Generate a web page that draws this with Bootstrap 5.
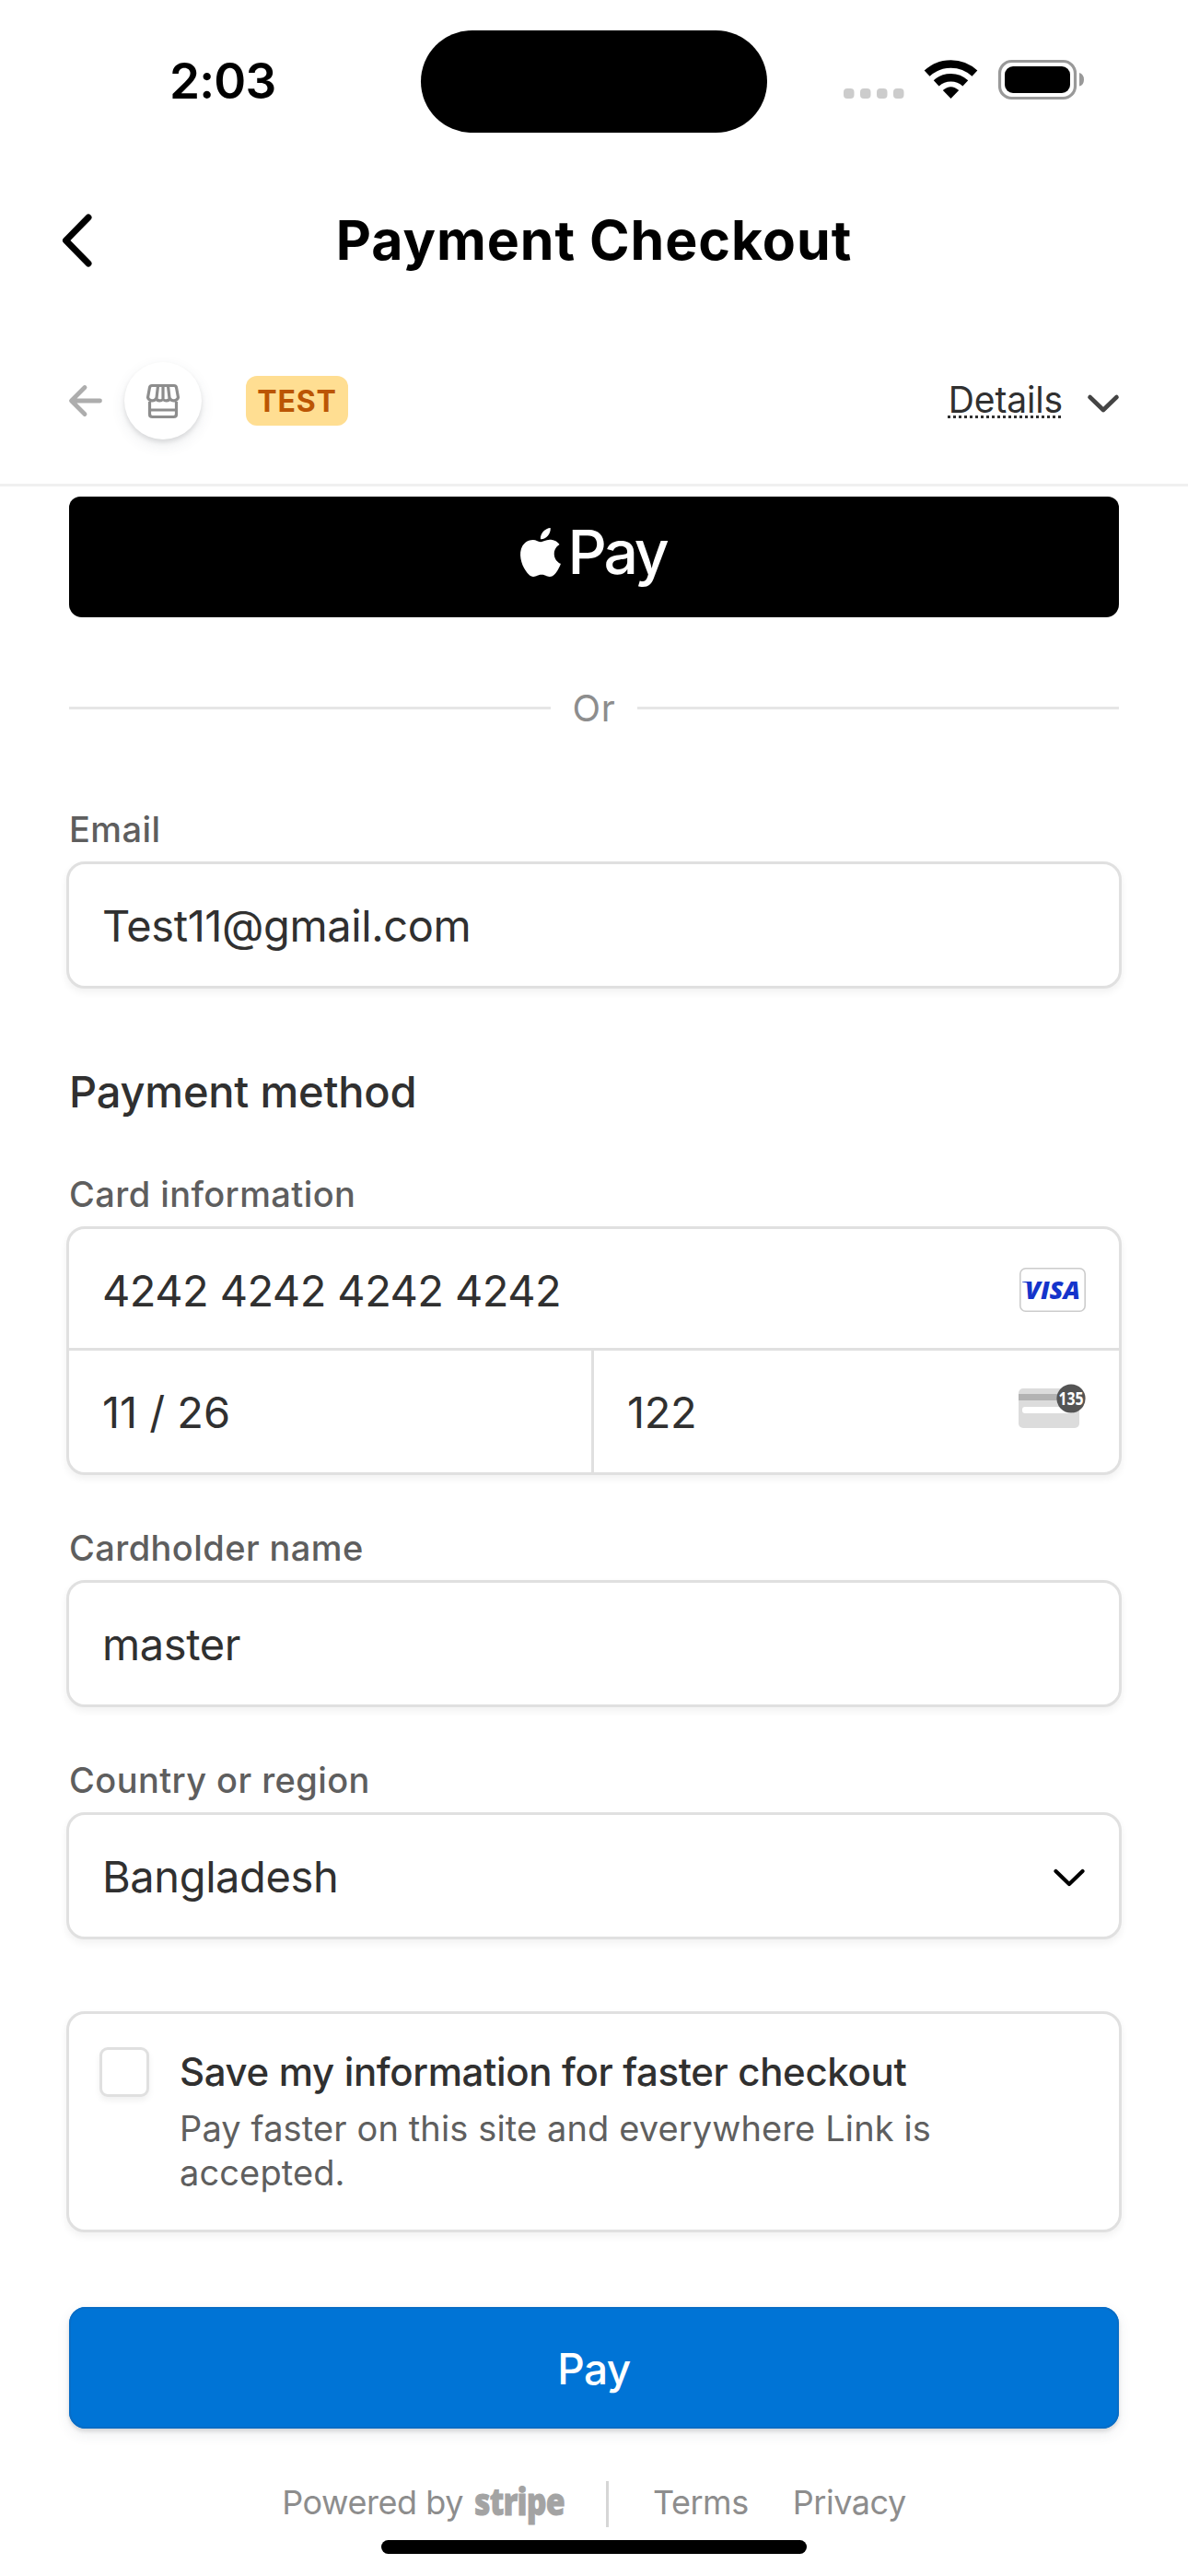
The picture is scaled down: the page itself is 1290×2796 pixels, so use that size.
<!DOCTYPE html>
<html lang="en">
<head>
<meta charset="utf-8">
<meta name="viewport" content="width=device-width, initial-scale=1">
<title>Payment Checkout</title>
<link href="https://cdn.jsdelivr.net/npm/bootstrap@5.3.0/dist/css/bootstrap.min.css" rel="stylesheet">
<style>
  body { font-family: Inter, "Liberation Sans", sans-serif; color: #303030; background: #fff; height: 2796px; overflow: hidden; }
  svg { display: block; flex: none; overflow: visible; }
  .status-bar { height: 177px; }
  .status-side { width: 457px; }
  .clock { font-size: 53px; font-weight: 600; line-height: 60px; letter-spacing: -.8px; color: #000; padding-left: 184px; margin-top: -1px; }
  .island { width: 376px; height: 111px; border-radius: 56px; background: #000; }
  .status-icons { padding-left: 83px; margin-top: -4px; height: 43px; }
  .wifi { margin-left: 22px; }
  .battery { margin-left: 23px; }
  .title-bar { height: 168px; padding: 0 67px; color: #000; }
  .title-bar h1 { font-size: 59px; font-weight: 700; line-height: 70px; letter-spacing: .95px; }
  .title-spacer { width: 33px; }
  .merchant-bar { height: 183px; padding: 0 75px; border-bottom: 3px solid #f0f0f0; }
  .shop { width: 84px; height: 84px; margin-left: 24px; box-shadow: 0 6px 15px rgba(60,66,87,.10), 0 3px 5px rgba(0,0,0,.10); }
  .test-tag { margin-left: 48px; width: 111px; height: 54px; padding-top: 1px; border-radius: 12px; background: #ffde92; color: #bb5504; font-size: 32px; font-weight: 700; letter-spacing: .8px; }
  .details-link { font-size: 39px; line-height: 34px; letter-spacing: -.15px; color: #303030; }
  .dots { height: 3px; margin: 0 0 0 -1px; background: repeating-linear-gradient(90deg, #303030 0 3px, transparent 3px 6px); }
  .details-chevron { margin: 5px 0 0 27px; }
  .pay-form { padding: 11px 72px 0; }
  .apple-pay { height: 131px; margin: 0 3px; padding: 0 2px 11px 0; border-radius: 12px 12px 14px 14px; background: #000; color: #fff; font-size: 66px; font-weight: 500; letter-spacing: -3.2px; gap: 8px; }
  .or-row { height: 197px; margin: 0 3px; gap: 24px; color: #8d8d8d; font-size: 40px; letter-spacing: .6px; }
  .or-row .rule { height: 3px; background: #e6e6e6; }
  .field-label { display: block; font-size: 38px; font-weight: 500; line-height: 66px; letter-spacing: .42px; color: #5e5e5e; padding-left: 3px; margin-bottom: 2px; }
  .section-title { font-size: 47px; font-weight: 500; line-height: 60px; letter-spacing: -.2px; margin: 82px 0 48px 3px; }
  .field-gap { margin-top: 46px; }
  .field-box { border: 3px solid #e0e0e0; border-radius: 20px; background: #fff; box-shadow: 0 4px 8px rgba(0,0,0,.06); }
  .field-box .form-control { border: 0; background: none; box-shadow: none; color: #303030; font-size: 47px; line-height: 60px; letter-spacing: -.4px; padding: 0 0 0 36px; height: 132px; min-height: 0; border-radius: 0; }
  .card-number { height: 132px; border-bottom: 3px solid #e0e0e0; padding: 3px 36px 0 0; }
  .card-number .form-control { letter-spacing: -.57px; }
  .card-expiry { width: 570px; flex: none; border-right: 3px solid #e0e0e0; }
  .card-expiry .form-control { letter-spacing: -.05px; }
  .card-cvc { padding-right: 36px; }
  .cvc-icon { margin-bottom: 18px; }
  .country { padding-right: 37px; }
  .country svg { margin-top: 4px; }
  .save-box { margin-top: 78px; height: 240px; padding: 0 33px; }
  .save-box .form-check-input { width: 54px; height: 54px; margin: 36px 0 0 0; float: none; flex: none; border: 3px solid #e0e0e0; border-radius: 9px; box-shadow: 0 4px 7px rgba(0,0,0,.06); }
  .save-text { padding: 36px 0 0 33px; }
  .save-title { font-size: 42px; font-weight: 500; line-height: 54px; letter-spacing: -.36px; }
  .save-note { font-size: 38px; line-height: 48px; letter-spacing: .12px; color: #5f5f5f; margin-top: 10px; }
  .pay-btn { height: 132px; margin: 81px 3px 0; padding-top: 8px; border: 0; border-radius: 18px; background: #0074d6; color: #fff; font-size: 46px; font-weight: 500; letter-spacing: -.5px; box-shadow: inset 0 0 0 2px #086dc6, 0 6px 15px rgba(60,66,87,.09), 0 3px 4px rgba(0,0,0,.12); }
  .legal { height: 50px; margin-top: 57px; font-size: 36px; line-height: 47px; letter-spacing: -.45px; color: #8d8d8d; }
  .legal a { color: inherit; text-decoration: none; margin-left: 48px; }
  .legal .stripe-mark { margin-left: 12px; }
  .legal .bar { width: 3px; height: 50px; margin-left: 45px; background: #d6d6d6; }
  .home-bar { width: 462px; height: 15px; border-radius: 8px; background: #000; margin: 14px auto 0; }
</style>
<script src="https://cdn.jsdelivr.net/npm/bootstrap@5.3.0/dist/js/bootstrap.bundle.min.js"></script>
</head>
<body>
<header>
  <div class="status-bar d-flex align-items-center">
    <div class="status-side"><div class="clock">2:03</div></div>
    <div class="island"></div>
    <div class="status-side status-icons d-flex align-items-start">
      <svg width="66" height="43" viewBox="0 0 66 43" fill="#ccc"><rect y="31" width="11.5" height="11" rx="4"/><rect x="18" y="31" width="11.5" height="11" rx="4"/><rect x="36" y="31" width="11.5" height="11" rx="4"/><rect x="54" y="31" width="11.5" height="11" rx="4"/></svg>
      <svg class="wifi" width="57" height="43" viewBox="0 0 57 43" fill="none" stroke="#000" stroke-width="8.6"><path d="M2.6 14.7A38 38 0 0 1 54.4 14.7"/><path d="M12.7 25.4A23.2 23.2 0 0 1 44.3 25.4"/><path d="M28.5 42 19.8 33Q28.5 25.4 37.2 33Z" fill="#000" stroke="none"/></svg>
      <svg class="battery" width="94" height="43" viewBox="0 0 94 43"><rect x="1.5" y="1.5" width="82" height="40" rx="13" fill="none" stroke="#999" stroke-width="3.2"/><rect x="7" y="7" width="71" height="29" rx="9"/><path d="M88 14Q93 15.5 93 21.5T88 28.5Z" fill="#999"/></svg>
    </div>
  </div>
  <div class="title-bar d-flex align-items-center justify-content-between">
    <svg width="33" height="58" viewBox="0 0 33 58" fill="none" stroke="#000" stroke-width="7" stroke-linecap="round" stroke-linejoin="round"><path d="M29 4 4.5 29 29 54"/></svg>
    <h1 class="m-0">Payment Checkout</h1>
    <span class="title-spacer"></span>
  </div>
  <div class="merchant-bar d-flex align-items-center">
    <svg width="36" height="34" viewBox="0 0 36 34" fill="none" stroke="#adadad" stroke-width="4.8" stroke-linecap="round" stroke-linejoin="round"><path d="M17 2.500 2.500 17 17 31.500M3 17H33.500"/></svg>
    <div class="shop rounded-circle bg-white d-flex align-items-center justify-content-center">
      <svg width="36" height="37" viewBox="0 0 36 37" fill="none" stroke="#8d8d8d" stroke-width="3.200" stroke-linejoin="round"><path d="M6 1.500H30Q32 1.500 32.500 3.500L34.500 14.500A5 5 0 0 1 25.500 15.500A4.300 4.300 0 0 1 18 16A4.300 4.300 0 0 1 10.500 15.500A5 5 0 0 1 1.500 14.500L3.500 3.500Q4 1.500 6 1.500ZM12.500 2 11 15M23.500 2 25 15"/><path d="M3.500 19V32.500Q3.500 35.500 6.500 35.500H29.500Q32.500 35.500 32.500 32.500V19M3.500 28H32.500"/><path d="M18 2V15"/></svg>
    </div>
    <div class="test-tag d-flex align-items-center justify-content-center">TEST</div>
    <a class="details-link ms-auto text-decoration-none" href="#">Details<div class="dots"></div></a>
    <svg class="details-chevron" width="34" height="20" viewBox="0 0 34 20" fill="none" stroke="#444" stroke-width="4.600" stroke-linecap="round" stroke-linejoin="round"><path d="M2.500 3 17 17 31.500 3"/></svg>
  </div>
</header>
<main class="pay-form">
  <div class="apple-pay d-flex align-items-center justify-content-center">
    <svg width="44" height="53" viewBox="2.200 0 19.600 24" fill="#fff" preserveAspectRatio="none"><path d="M12.152 6.896c-.948 0-2.415-1.078-3.960-1.040-2.040.027-3.910 1.183-4.961 3.014-2.117 3.675-.546 9.103 1.519 12.090 1.013 1.454 2.208 3.090 3.792 3.039 1.520-.065 2.090-.987 3.935-.987 1.831 0 2.350.987 3.960.948 1.637-.026 2.676-1.480 3.676-2.948 1.156-1.688 1.636-3.325 1.662-3.415-.039-.013-3.182-1.221-3.220-4.857-.026-3.040 2.480-4.494 2.597-4.559-1.429-2.090-3.623-2.324-4.390-2.376-2-.156-3.675 1.090-4.610 1.090zM15.530 3.830c.843-1.012 1.400-2.427 1.245-3.830-1.207.052-2.662.805-3.532 1.818-.780.896-1.454 2.338-1.273 3.714 1.338.104 2.715-.688 3.559-1.701"/></svg>
    <span>Pay</span>
  </div>
  <div class="or-row d-flex align-items-center"><div class="rule flex-fill"></div><span>Or</span><div class="rule flex-fill"></div></div>
  <label class="field-label" for="email">Email</label>
  <div class="field-box"><input id="email" class="form-control" value="Test11@gmail.com"></div>
  <h2 class="section-title">Payment method</h2>
  <label class="field-label" for="card">Card information</label>
  <div class="field-box">
    <div class="card-number d-flex align-items-center"><input id="card" class="form-control" value="4242 4242 4242 4242">
      <svg width="72" height="48" viewBox="0 0 72 48"><rect x=".8" y=".8" width="70.400" height="46.400" rx="6" fill="#fff" stroke="#ccc" stroke-width="1.600"/><path d="M3 15H10L11 18Q8 15.800 3 15.500Z" fill="#1434cb"/><text x="6" y="34" textLength="60" lengthAdjust="spacingAndGlyphs" font-family="Open Sans" font-weight="800" font-style="italic" font-size="26.500" fill="#1434cb">VISA</text></svg></div>
    <div class="d-flex">
      <div class="card-expiry"><input class="form-control" value="11 / 26"></div>
      <div class="card-cvc d-flex flex-fill align-items-center"><input class="form-control" value="122">
        <svg class="cvc-icon" width="73" height="60" viewBox="0 0 73 60"><rect y="14" width="66" height="43" rx="5" fill="#dcdcdc"/><path fill="#b3b3b3" d="M0 20H50V27H0Z"/><rect x="4" y="34" width="56" height="7" rx="3" fill="#fff"/><circle cx="57" cy="25" r="15.600" fill="#545454"/><text x="43.500" y="32" textLength="27" lengthAdjust="spacingAndGlyphs" font-family="Open Sans" font-weight="700" font-size="19" fill="#fff">135</text></svg></div>
    </div>
  </div>
  <label class="field-label field-gap" for="holder">Cardholder name</label>
  <div class="field-box"><input id="holder" class="form-control" value="master"></div>
  <label class="field-label field-gap" for="country">Country or region</label>
  <div class="field-box country d-flex align-items-center"><input id="country" class="form-control" value="Bangladesh">
    <svg width="34" height="20" viewBox="0 0 34 20" fill="none" stroke="#000" stroke-width="4.200" stroke-linecap="round" stroke-linejoin="round"><path d="M2.500 3 17 17 31.500 3"/></svg></div>
  <div class="field-box save-box d-flex align-items-start">
    <input class="form-check-input" type="checkbox">
    <div class="save-text"><div class="save-title">Save my information for faster checkout</div>
    <div class="save-note">Pay faster on this site and everywhere Link is<br>accepted.</div></div>
  </div>
  <div class="d-grid"><button class="pay-btn btn" type="button">Pay</button></div>
</main>
<footer>
  <div class="legal d-flex justify-content-center">
    <span>Powered by</span>
    <svg class="stripe-mark" width="98" height="50" viewBox="0 0 98 50"><text x="0" y="37" textLength="98" lengthAdjust="spacingAndGlyphs" font-family="Open Sans" font-weight="800" font-size="41" fill="#a3a3a3" stroke="#a3a3a3" stroke-width=".8" letter-spacing="-1">stripe</text></svg>
    <span class="bar"></span>
    <a href="#">Terms</a>
    <a href="#">Privacy</a>
  </div>
  <div class="home-bar"></div>
</footer>
</body>
</html>
